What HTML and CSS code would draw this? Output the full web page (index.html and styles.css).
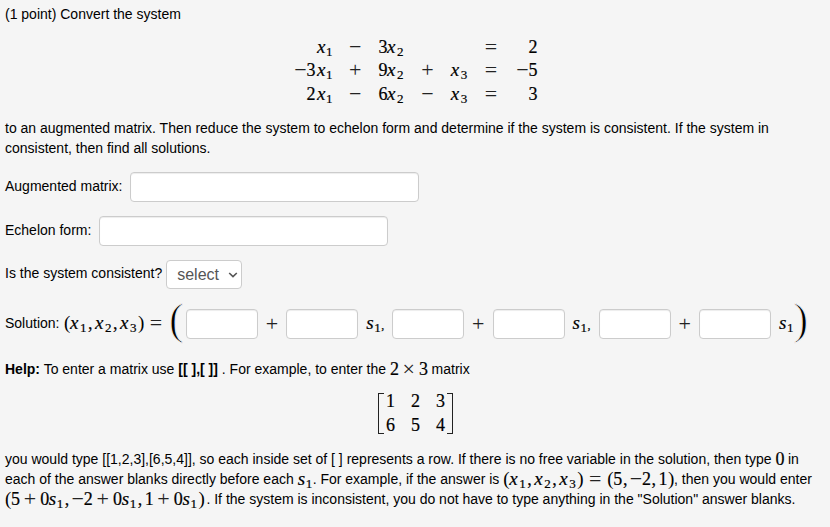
FILE: index.html
```html
<!DOCTYPE html>
<html lang="en">
<head>
    <meta charset="UTF-8">
    <title>Augmented matrix</title>
    <link rel="stylesheet" href="styles.css">
</head>
<body>
    <div class="problem">
        <p>(1 point) Convert the system</p>

        <div class="system math">
            <span class="right"><i>x</i><sub>1</sub></span><b class="op">−</b><span>3<i>x</i><sub>2</sub></span><span></span><span></span><b class="op">=</b><span class="right">2</span>
            <span class="right"><b class="op neg">−</b>3<i>x</i><sub>1</sub></span><b class="op">+</b><span>9<i>x</i><sub>2</sub></span><b class="op">+</b><span><i>x</i><sub>3</sub></span><b class="op">=</b><span class="right"><b class="op neg">−</b>5</span>
            <span class="right">2<i>x</i><sub>1</sub></span><b class="op">−</b><span>6<i>x</i><sub>2</sub></span><b class="op">−</b><span><i>x</i><sub>3</sub></span><b class="op">=</b><span class="right">3</span>
        </div>

        <p>to an augmented matrix. Then reduce the system to echelon form and determine if the system is consistent. If the system in<br>consistent, then find all solutions.</p>

        <div class="field field-matrix">
            <label for="augmented">Augmented matrix:</label>
            <input type="text" id="augmented">
        </div>
        <div class="field field-echelon">
            <label for="echelon">Echelon form:</label>
            <input type="text" id="echelon">
        </div>
        <div class="field field-select">
            <label>Is the system consistent?</label>
            <div class="select">
                <span>select</span>
                <svg width="10" height="6" viewBox="0 0 10 6"><path d="M1.2 1 L5 4.6 L8.8 1" fill="none" stroke="#555" stroke-width="1.6"/></svg>
            </div>
        </div>

        <div class="solution">
            <span class="lead">Solution:</span>
            <span class="math"><span class="paren">(</span><i>x</i><sub>1</sub><span class="comma">,</span><i>x</i><sub>2</sub><span class="comma">,</span><i>x</i><sub>3</sub><span class="paren close">)</span><b class="op rel">=</b></span>
            <span class="big-paren">(</span>
            <input type="text" class="blank">
            <span class="math plus"><b class="op">+</b></span>
            <input type="text" class="blank">
            <span class="math param"><i class="s">s</i><sub>1</sub><small>,</small></span>
            <input type="text" class="blank">
            <span class="math plus"><b class="op">+</b></span>
            <input type="text" class="blank">
            <span class="math param"><i class="s">s</i><sub>1</sub><small>,</small></span>
            <input type="text" class="blank">
            <span class="math plus"><b class="op">+</b></span>
            <input type="text" class="blank">
            <span class="math param last"><i class="s">s</i><sub>1</sub></span>
            <span class="big-paren end">)</span>
        </div>

        <p><strong>Help:</strong> To enter a matrix use <strong>[[ ],[ ]]</strong> . For example, to enter the <span class="math">2<b class="op bin">×</b>3</span> matrix</p>

        <div class="matrix math">
            <span>1</span><span>2</span><span>3</span>
            <span>6</span><span>5</span><span>4</span>
        </div>

        <p>you would type [[1,2,3],[6,5,4]], so each inside set of [ ] represents a row. If there is no free variable in the solution, then type <span class="math">0</span> in<br>each of the answer blanks directly before each <span class="math"><i class="s">s</i><sub>1</sub></span>. For example, if the answer is <span class="math"><span class="paren">(</span><i>x</i><sub>1</sub><span class="comma">,</span><i>x</i><sub>2</sub><span class="comma">,</span><i>x</i><sub>3</sub><span class="paren close">)</span><b class="op rel">=</b><span class="paren">(</span>5<span class="comma">,</span><b class="op neg">−</b>2<span class="comma">,</span>1<span class="paren close">)</span></span>, then you would enter<br><span class="math"><span class="paren">(</span>5<b class="op bin">+</b>0<i class="s">s</i><sub>1</sub><span class="comma">,</span><b class="op neg">−</b>2<b class="op bin">+</b>0<i class="s">s</i><sub>1</sub><span class="comma">,</span>1<b class="op bin">+</b>0<i class="s">s</i><sub>1</sub><span class="paren close">)</span></span><span class="after">.</span> If the system is inconsistent, you do not have to type anything in the "Solution" answer blanks.</p>
    </div>
</body>
</html>
```
FILE: styles.css
```css
* {
    box-sizing: border-box;
}

body {
    margin: 0;
    background-color: #f5f5f5;
    color: #000;
    font-family: "Liberation Sans", Arial, sans-serif;
    font-size: 14px;
    line-height: 20px;
}

.problem {
    padding: 4px 0 0 5px;
    white-space: nowrap;
}

p {
    margin: 0;
}

/* inline math */
.math {
    font-family: "Liberation Serif", "Times New Roman", serif;
    font-size: 18px;
    letter-spacing: -0.4px;
    line-height: 1px;
    -webkit-text-stroke: 0.2px #000;
}

p .math {
    vertical-align: -1px;
}

.after {
    padding-left: 2px;
}

.math i {
    display: inline-block;
    width: 10px;
    font-size: 19px;
}

.math i.s {
    width: 8px;
}

.math sub {
    display: inline-block;
    width: 7px;
    font-size: 13px;
    line-height: 1px;
    vertical-align: -3px;
}

.op {
    display: inline-flex;
    justify-content: center;
    width: 12px;
    font-size: 22px;
    font-weight: normal;
    letter-spacing: 0;
    color: #222;
    transform: translateY(1px);
    -webkit-text-stroke: 0;
}

.op.bin {
    margin: 0 4.3px;
}

.op.rel {
    margin: 0 6px;
}

.comma {
    display: inline-block;
    width: 8px;
    padding-left: 1px;
}

.paren {
    display: inline-block;
    width: 6px;
    font-size: 19px;
    -webkit-text-stroke: 0;
}

.paren.close {
    padding-left: 1px;
    width: 7px;
}

/* system of equations */
.system {
    display: grid;
    grid-template-columns: 38px 12px 26px 12px 17px 13px 22px;
    grid-template-rows: 23px 24px 23px;
    column-gap: 17.2px;
    align-items: baseline;
    width: max-content;
    height: 70px;
    margin: 11px 0 13px 289px;
    line-height: 23px;
}

.system .op {
    line-height: 1px;
}

.right {
    text-align: right;
}

/* answer fields */
input,
.select {
    height: 30px;
    padding: 4px 6px;
    background-color: #fff;
    border: 1px solid #ccc;
    border-radius: 4px;
    box-shadow: inset 0 1px 1px rgba(0, 0, 0, 0.075);
}

.field {
    display: flex;
    align-items: center;
    height: 30px;
    margin-bottom: 14px;
}

.field label {
    padding-bottom: 2px;
}

.field input {
    width: 289px;
    margin-left: 8px;
}

.field-matrix {
    margin-top: 14px;
}

.field-matrix input {
    margin-left: 7px;
}

.select {
    display: flex;
    align-items: center;
    width: 76px;
    height: 29px;
    margin-left: 4px;
    padding: 0 3px 0 10px;
    color: #555;
    font-size: 16px;
    box-shadow: none;
}

.select svg {
    margin-left: auto;
}

.field-select {
    height: 29px;
}

.field-select label {
    padding-bottom: 3px;
}

.solution {
    display: flex;
    align-items: center;
    height: 40px;
    margin: 15px 0;
}

.lead {
    width: 59px;
    padding-bottom: 2px;
}

.blank {
    width: 72px;
    margin: 0;
}

.plus {
    width: 28.3px;
    padding-left: 8px;
}

.plus .op {
    transform: none;
}

.param {
    width: 34px;
    padding: 2px 0 0 8px;
}

.param.last {
    width: 22.5px;
}

.param small {
    font-size: 12px;
}

/* tall delimiters around the answer, thinned with a page-coloured stroke */
.big-paren {
    width: 18px;
    padding-left: 1px;
    font-family: "Liberation Serif", serif;
    font-size: 44px;
    line-height: 40px;
    transform: translateY(-4px);
    -webkit-text-stroke: 1px #f5f5f5;
}

.big-paren.end {
    padding-left: 0;
}

/* 2x3 example */
.matrix {
    display: grid;
    grid-template-columns: repeat(3, 9px);
    grid-template-rows: 24px 24px;
    column-gap: 16px;
    align-items: center;
    justify-content: center;
    width: 75px;
    height: 41px;
    margin: 14px 0 15px 373px;
    align-content: center;
    background:
        linear-gradient(#222, #222) left top / 5px 1px,
        linear-gradient(#222, #222) left bottom / 5px 1px,
        linear-gradient(#222, #222) right top / 5px 1px,
        linear-gradient(#222, #222) right bottom / 5px 1px;
    background-repeat: no-repeat;
    border-left: 1px solid #222;
    border-right: 1px solid #222;
}
```
